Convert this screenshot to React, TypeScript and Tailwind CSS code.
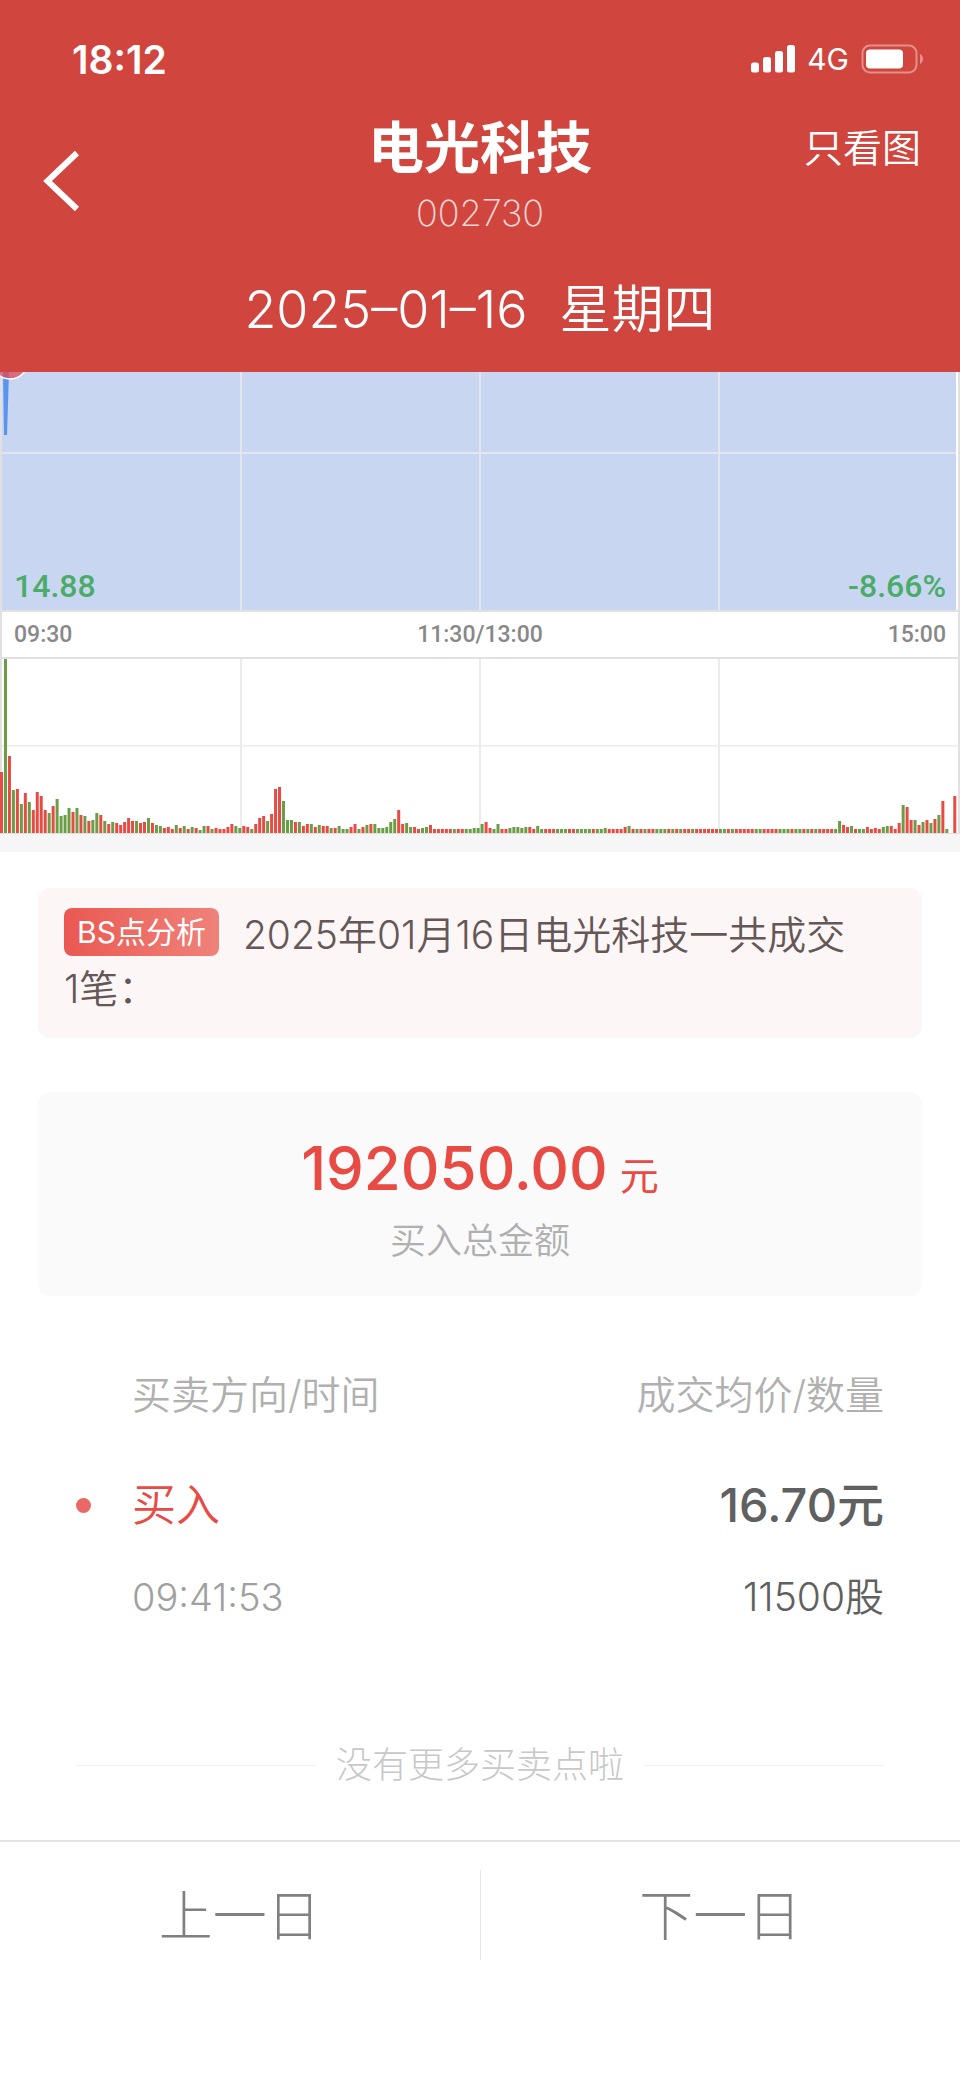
import React from "react";

// One entry per minute: r = up, g = down, followed by the bar height.
const VOLUME =
  "r61 g175 r77 g43 r44 g29 r40 g31 r23 r41 r37 r23 g20 r27 g34 g17 g18 g25 r21 g25 " +
  "r18 g17 r12 g13 g20 r18 g12 r9 g11 r10 r8 r11 r15 r12 g12 r10 r11 g15 r10 g8 " +
  "g7 r5 r6 r4 g8 r5 g7 r4 g6 r5 g3 g7 r7 g4 r5 r4 r4 r6 r9 g7 " +
  "g5 r7 r6 g4 r9 r15 r17 g12 r19 r44 r46 g32 g13 g13 r11 g11 r7 r9 g9 r6 " +
  "g8 r7 r7 g5 r5 g7 g4 g4 r6 r9 g4 r6 g8 r9 g9 g5 g5 g6 g11 g14 " +
  "r23 r9 g10 g6 r6 r4 g5 g6 r8 r4 r4 r4 r4 r4 g4 r4 r4 g4 g4 g5 " +
  "g5 g9 r11 r5 g4 g9 r4 r4 g5 g6 g6 g5 g6 r6 r4 g7 g4 r4 r4 r4 " +
  "g4 g4 g4 r4 r4 g4 g4 g4 g4 r4 g4 g4 g5 r4 r4 r4 r4 r6 g7 r4 " +
  "g4 r4 g4 r4 r4 g4 g4 g4 r4 g4 r4 g4 r4 r4 g4 r4 r4 r4 r4 r4 " +
  "r4 g4 g4 r4 g4 r4 r4 r4 r4 r4 g4 g4 r4 r4 r4 r4 g4 g4 g4 r4 " +
  "g4 g4 r4 g4 r4 g4 r4 r4 r4 r4 g4 g12 r8 r6 g7 r4 g4 g4 r6 r4 " +
  "r5 r4 g6 g7 r7 r4 r10 g28 r26 r13 g13 r8 g11 r13 g10 r14 g18 r32 g4 r0 r37";

const bars = VOLUME.split(" ").map((entry) => ({
  up: entry[0] === "r",
  height: Number(entry.slice(1)),
}));

const BAR_STEP = 3.972;

function StatusBar() {
  return (
    <div className="flex h-[118px] items-center justify-between pl-[72px] pr-[36px]">
      <span className="text-[39px] leading-none font-semibold">18:12</span>
      <div className="flex items-center gap-3">
        <svg width="44" height="28" viewBox="0 0 44 28" fill="#fff" aria-hidden="true">
          <rect x="0" y="17.500" width="8" height="10" rx="2.500" />
          <rect x="12" y="12" width="8" height="15.500" rx="2.500" />
          <rect x="24" y="6" width="8" height="21.500" rx="2.500" />
          <rect x="36" y="0" width="8" height="27.500" rx="2.500" />
        </svg>
        <span className="text-[30px] leading-none">4G</span>
        <svg width="63" height="30" viewBox="0 0 63 30" aria-hidden="true">
          <rect x="1.500" y="1.500" width="54" height="27" rx="7.500" fill="none" stroke="#fff" strokeOpacity="0.4" strokeWidth="2" />
          <rect x="5" y="5.500" width="37" height="19" rx="4" fill="#fff" />
          <path d="M59 10c4 1.500 4 8.500 0 10z" fill="#fff" fillOpacity="0.4" />
        </svg>
      </div>
    </div>
  );
}

function Header() {
  return (
    <header className="bg-[#d0463f] text-white">
      <StatusBar />
      <div className="grid h-[127px] grid-cols-[1fr_auto_1fr] items-start">
        <button type="button" aria-label="返回" className="ml-[42px] mt-8 justify-self-start">
          <svg width="38" height="62" viewBox="0 0 38 62" fill="none" stroke="#fff" strokeWidth="6" aria-hidden="true">
            <path d="M35 3L5.500 31L35 59" />
          </svg>
        </button>
        <div className="text-center">
          <h1 className="text-[56px] leading-[60px] font-bold">电光科技</h1>
          <p className="mt-3 text-[36px] leading-[46px] font-extralight text-white/80">002730</p>
        </div>
        <button type="button" className="mr-[39px] justify-self-end text-[39px] leading-[60px] font-[350]">
          只看图
        </button>
      </div>
      <p className="flex h-[127px] justify-center gap-8 pt-8 text-[52px] leading-[66px] font-[350]">
        <span>2025–01–16</span>
        <span>星期四</span>
      </p>
    </header>
  );
}

function Chart() {
  return (
    <section aria-label="分时图" className="bg-white">
      <div className="relative h-[238px]">
        <svg className="block h-full w-full" viewBox="0 0 960 238" preserveAspectRatio="none" aria-hidden="true">
          <rect x="2" y="0" width="954" height="238" fill="#c8d6f1" />
          <path d="M0 0H2V238H0zM958 0H960V238H958z" fill="#e1e1e4" />
          <path d="M240 0h2v238h-2zM479 0h2v238h-2zM718 0h2v238h-2zM2 80h954v2H2z" fill="#e3e6ec" />
          <path d="M3 0h6l-2 63h-3z" fill="#5b94ee" />
          <circle cx="10" cy="-11" r="18" fill="#e0485a" fillOpacity="0.75" stroke="#fff" strokeWidth="1.500" />
        </svg>
        <div className="absolute inset-x-0 bottom-1 flex justify-between px-[14px] font-[Roboto,sans-serif] text-[32px] leading-10 font-medium text-[#4bab68]">
          <span>14.88</span>
          <span>-8.66%</span>
        </div>
      </div>
      <div className="grid h-[49px] grid-cols-3 items-center border-2 border-[#e1e1e1] px-3 font-[Roboto,sans-serif] text-[23px] leading-none font-medium text-[#888]">
        <span>09:30</span>
        <span className="text-center">11:30/13:00</span>
        <span className="text-right">15:00</span>
      </div>
      <svg className="block h-[175px] w-full" viewBox="0 0 960 175" preserveAspectRatio="none" aria-hidden="true">
        <path d="M240 0h2v175h-2zM479 0h2v175h-2zM718 0h2v175h-2zM0 86h960v1.500H0z" fill="#ececec" />
        <path d="M0 0H2V175H0zM958 0H960V175H958zM0 174H960V175H0z" fill="#e1e1e1" />
        {bars.map((bar, i) => (
          <rect
            key={i}
            x={i * BAR_STEP}
            y={174 - bar.height}
            width="3"
            height={bar.height}
            fill={bar.up ? "#e84a44" : "#6b9d47"}
          />
        ))}
      </svg>
      <div className="h-[18px] bg-[#f6f6f6]" />
    </section>
  );
}

export default function App() {
  return (
    <div className="flex min-h-screen flex-col bg-white font-[Inter,'Noto_Sans_CJK_SC',sans-serif]">
      <Header />
      <main>
        <Chart />
        <div className="px-[38px] pt-9">
          <p className="rounded-xl bg-[#fdf6f6] px-[26px] pt-5 pb-[22px] text-[39px] leading-[54px] font-[350] text-[#655757]">
            <span className="mr-6 inline-block rounded-lg bg-linear-to-r from-[#ea5852] to-[#ef8279] px-[13px] align-[6px] text-[30px] leading-[48px] font-normal text-white">
              BS点分析
            </span>
            2025年01月16日电光科技一共成交<span className="whitespace-nowrap">1笔：</span>
          </p>
          <div className="mt-[54px] flex h-[204px] flex-col items-center rounded-xl bg-[#fafafa] pt-10">
            <p className="flex items-baseline gap-3 text-[#e84a44]">
              <span className="text-[60px] leading-[72px] font-medium">192050.00</span>
              <span className="text-[39px] leading-[72px]">元</span>
            </p>
            <p className="mt-1 text-[36px] leading-[50px] font-[350] text-[#b0b0b0]">买入总金额</p>
          </div>
        </div>
        <div className="px-[76px] pt-11">
          <table className="w-full text-[39px] leading-[54px]">
            <thead>
              <tr className="h-[110px] text-[#b0b0b0]">
                <th scope="col" className="pl-14 text-left font-[350]">买卖方向/时间</th>
                <th scope="col" className="text-right font-[350]">成交均价/数量</th>
              </tr>
            </thead>
            <tbody>
              <tr className="h-[110px]">
                <td className="text-[44px] font-[350] text-[#e84a44]">
                  <span className="flex items-center gap-[41px]">
                    <span className="size-[15px] rounded-full bg-[#ea6868]" />
                    买入
                  </span>
                </td>
                <td className="text-right text-[47px] font-medium text-[#606060]">16.70元</td>
              </tr>
              <tr className="h-[74px]">
                <td className="pl-14 text-[38px] font-[350] text-[#a0a0a0]">09:41:53</td>
                <td className="text-right font-[350] text-[#606060]">11500股</td>
              </tr>
            </tbody>
          </table>
          <div className="mt-[104px] mb-12 flex items-center gap-5 text-[36px] leading-[54px] font-light text-[#c8c8c8]">
            <span className="h-px flex-1 bg-[#f0f0f0]" />
            没有更多买卖点啦
            <span className="h-px flex-1 bg-[#f0f0f0]" />
          </div>
        </div>
      </main>
      <nav aria-label="切换日期" className="flex flex-1 items-start border-t-2 border-[#e5e5e5] pt-7">
        <button type="button" className="h-[90px] flex-1 border-r border-[#e5e5e5] pt-1 text-[54px] leading-none font-light text-[#808080]">
          上一日
        </button>
        <button type="button" className="h-[90px] flex-1 pt-1 text-[54px] leading-none font-light text-[#808080]">
          下一日
        </button>
      </nav>
    </div>
  );
}
